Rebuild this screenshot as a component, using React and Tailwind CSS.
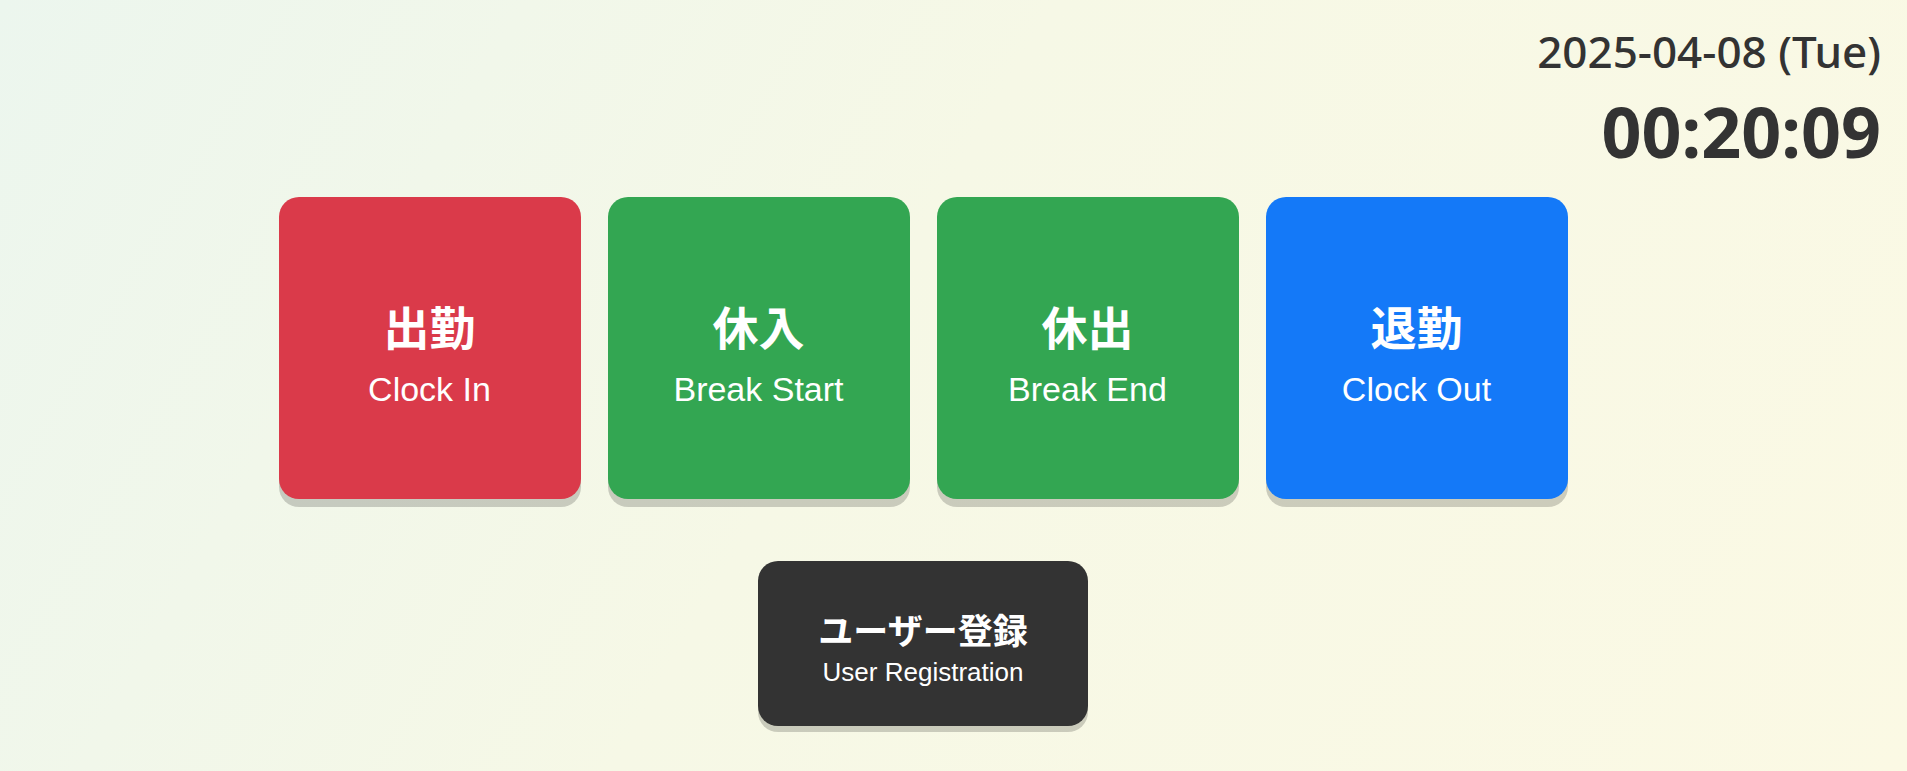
const jp = { fontFamily: '"Noto Sans CJK JP", "Noto Sans", sans-serif' }
const en = { fontFamily: '"Liberation Sans", Arial, sans-serif' }

const actions = [
  { ja: '出勤', label: 'Clock In', color: 'bg-[#da3a4a]' },
  { ja: '休入', label: 'Break Start', color: 'bg-[#33a652]' },
  { ja: '休出', label: 'Break End', color: 'bg-[#33a652]' },
  { ja: '退勤', label: 'Clock Out', color: 'bg-[#1479f8]' },
]

export default function App() {
  return (
    <div className="min-h-screen bg-[linear-gradient(120deg,#ecf6ee_0%,#f6f8e6_45%,#fbf9e4_100%)] text-[#333]">
      {/* Date & time */}
      <div
        className="flex flex-col items-end pr-[26px] pt-[21px]"
        style={{ fontFamily: '"Noto Sans", "Open Sans", sans-serif' }}
      >
        <div className="text-[44px] font-medium leading-[60px]">2025-04-08 (Tue)</div>
        <div className="mt-[3px] text-[70px] font-bold leading-[94px]">00:20:09</div>
      </div>

      {/* Punch buttons */}
      <div className="mt-[19px] flex justify-center gap-[27px] pr-[61px]">
        {actions.map((a) => (
          <button
            key={a.label}
            className={`${a.color} flex h-[302px] w-[302px] flex-col items-center justify-center rounded-[20px] pt-[10px] text-white shadow-[0_8px_0_rgba(0,0,0,0.18)]`}
          >
            <span className="text-[46px] font-bold leading-[56px]" style={jp}>
              {a.ja}
            </span>
            <span className="mt-[16px] text-[34px] leading-[40px]" style={en}>
              {a.label}
            </span>
          </button>
        ))}
      </div>

      {/* Registration */}
      <div className="mt-[62px] flex justify-center pr-[61px]">
        <button className="flex h-[165px] w-[330px] flex-col items-center justify-center rounded-[20px] bg-[#333] pt-[7px] text-white shadow-[0_6px_0_rgba(0,0,0,0.18)]">
          <span className="text-[35px] font-bold leading-[44px]" style={jp}>
            ユーザー登録
          </span>
          <span className="mt-[5px] text-[26px] leading-[32px]" style={en}>
            User Registration
          </span>
        </button>
      </div>
    </div>
  )
}
